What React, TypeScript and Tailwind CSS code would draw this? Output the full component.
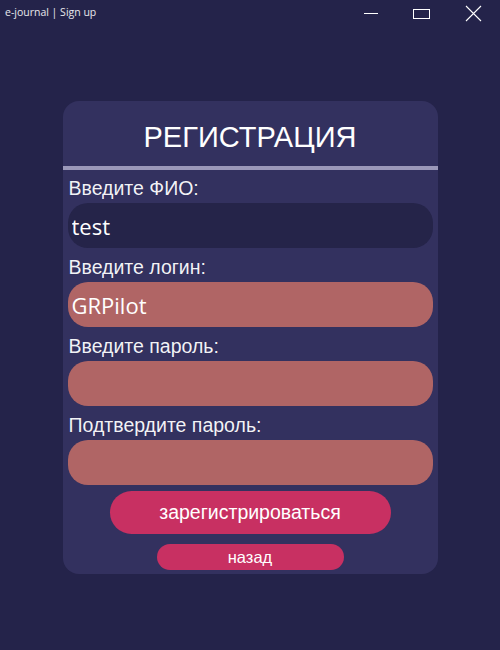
import React, { useState } from "react";

const font = { fontFamily: '"Liberation Sans", Arial, sans-serif' };
const inputFont = { fontFamily: '"Open Sans", "Noto Sans", sans-serif' };

const Field: React.FC<{
    label: string;
    value?: string;
    dark?: boolean;
    type?: string;
    autoFocus?: boolean;
}> = ({ label, value = "", dark, type = "text", autoFocus }) => {
    const [v, setV] = useState(value);
    return (
        <div className="flex flex-col">
            <label className="text-[19.5px] leading-[22px] text-white/95 pl-[1px] pb-[4px]" style={font}>
                {label}
            </label>
            <input
                type={type}
                value={v}
                autoFocus={autoFocus}
                onChange={(e) => setV(e.target.value)}
                className={`h-[45px] w-full rounded-[20px] px-[4px] text-[22px] text-white outline-none caret-white ${
                    dark ? "bg-[#252449]" : "bg-[#b06565]"
                }`}
                style={inputFont}
            />
        </div>
    );
};

export default function App() {
    return (
        <div className="w-[500px] h-[650px] bg-[#24234a] flex flex-col select-none">
            <div className="h-[28px] flex items-center justify-between shrink-0">
                <span className="text-[10.5px] text-white/90 pl-[5px] pb-[2px]" style={inputFont}>
                    e-journal | Sign up
                </span>
                <div className="flex items-center h-full">
                    <div className="w-[46px] h-full flex items-center justify-center">
                        <svg width="16" height="10" viewBox="0 0 16 10">
                            <line x1="1" y1="4.5" x2="15" y2="4.5" stroke="#fff" strokeWidth="1" />
                        </svg>
                    </div>
                    <div className="w-[56px] h-full flex items-center justify-center">
                        <svg width="18" height="12" viewBox="0 0 18 12">
                            <rect x="0.5" y="1.5" width="16" height="9" fill="none" stroke="#fff" strokeWidth="1" />
                        </svg>
                    </div>
                    <div className="w-[50px] h-full flex items-center justify-center pr-[4px] pb-[2px]">
                        <svg width="17" height="17" viewBox="0 0 17 17">
                            <path d="M1 1 L16 16 M16 1 L1 16" stroke="#fff" strokeWidth="1.1" />
                        </svg>
                    </div>
                </div>
            </div>

            <div className="flex justify-center pt-[73px]">
                <div className="w-[375px] h-[473px] bg-[#33315f] rounded-[16px] flex flex-col">
                    <h1 className="text-[29px] text-white text-center pt-[18px] h-[65px] leading-[36px]" style={font}>
                        РЕГИСТРАЦИЯ
                    </h1>
                    <div className="h-[4px] bg-[#9b98b9]" />
                    <div className="flex flex-col gap-[8px] px-[5px] pt-[7px]">
                        <Field label="Введите ФИО:" value="test" dark />
                        <Field label="Введите логин:" value="GRPilot" autoFocus />
                        <Field label="Введите пароль:" type="password" />
                        <Field label="Подтвердите пароль:" type="password" />
                    </div>
                    <div className="flex flex-col items-center pt-[6px] gap-[10px]">
                        <button className="w-[281px] h-[43px] rounded-[22px] bg-[#c83062] text-white text-[19.5px]" style={font}>
                            зарегистрироваться
                        </button>
                        <button className="w-[187px] h-[26px] rounded-[13px] bg-[#c83062] text-white text-[16.5px]" style={font}>
                            назад
                        </button>
                    </div>
                </div>
            </div>
        </div>
    );
}
